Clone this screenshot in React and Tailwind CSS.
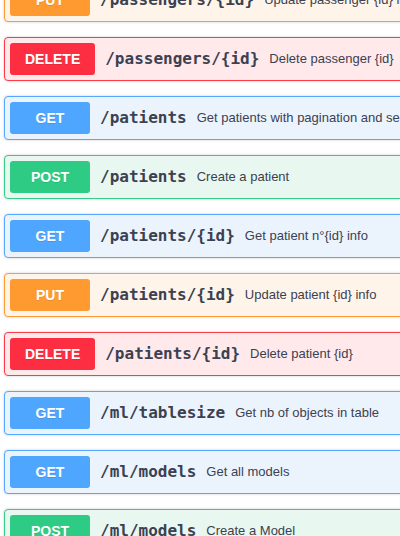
const ops = [
  { method: 'PUT', path: '/passengers/{id}', desc: 'Update passenger {id} info' },
  { method: 'DELETE', path: '/passengers/{id}', desc: 'Delete passenger {id}' },
  { method: 'GET', path: '/patients', desc: 'Get patients with pagination and search' },
  { method: 'POST', path: '/patients', desc: 'Create a patient' },
  { method: 'GET', path: '/patients/{id}', desc: 'Get patient n°{id} info' },
  { method: 'PUT', path: '/patients/{id}', desc: 'Update patient {id} info' },
  { method: 'DELETE', path: '/patients/{id}', desc: 'Delete patient {id}' },
  { method: 'GET', path: '/ml/tablesize', desc: 'Get nb of objects in table' },
  { method: 'GET', path: '/ml/models', desc: 'Get all models' },
  { method: 'POST', path: '/ml/models', desc: 'Create a Model' },
];

const styles = {
  GET: { block: 'bg-[#ebf4fd] border-[#55a8fd]', badge: 'bg-[#4fa6fe]' },
  POST: { block: 'bg-[#e8f8f0] border-[#36cb87]', badge: 'bg-[#2ecb84]' },
  PUT: { block: 'bg-[#fff4e9] border-[#fd9c33]', badge: 'bg-[#fe9a30]' },
  DELETE: { block: 'bg-[#ffe9ea] border-[#fc3a48]', badge: 'bg-[#fd2e42]' },
};

const OpBlock = ({ op }) => {
  const s = styles[op.method];
  return (
    <div className={`border rounded-[4px] shadow-[0_0_3px_rgba(0,0,0,0.19)] mb-[15px] ${s.block}`}>
      <div className="flex items-center p-[5px]">
        <span
          className={`${s.badge} min-w-[80px] h-[32px] px-[15px] flex items-center justify-center rounded-[3px] text-white text-[14px] font-bold font-['Liberation_Sans',sans-serif] [text-shadow:0_1px_0_rgba(0,0,0,0.1)]`}
        >
          {op.method}
        </span>
        <span className="px-[10px] text-[16px] font-bold text-[#3b4151] font-['DejaVu_Sans_Mono',monospace] whitespace-nowrap">
          {op.path}
        </span>
        <span className="text-[13px] text-[#3b4151] font-['Liberation_Sans',sans-serif] whitespace-nowrap">
          {op.desc}
        </span>
      </div>
    </div>
  );
};

export default function App() {
  return (
    <div className="w-[400px] h-[536px] overflow-hidden bg-white">
      <div className="w-[640px] pl-[4px] -mt-[22px]">
        {ops.map((op, i) => (
          <OpBlock key={i} op={op} />
        ))}
      </div>
    </div>
  );
}
